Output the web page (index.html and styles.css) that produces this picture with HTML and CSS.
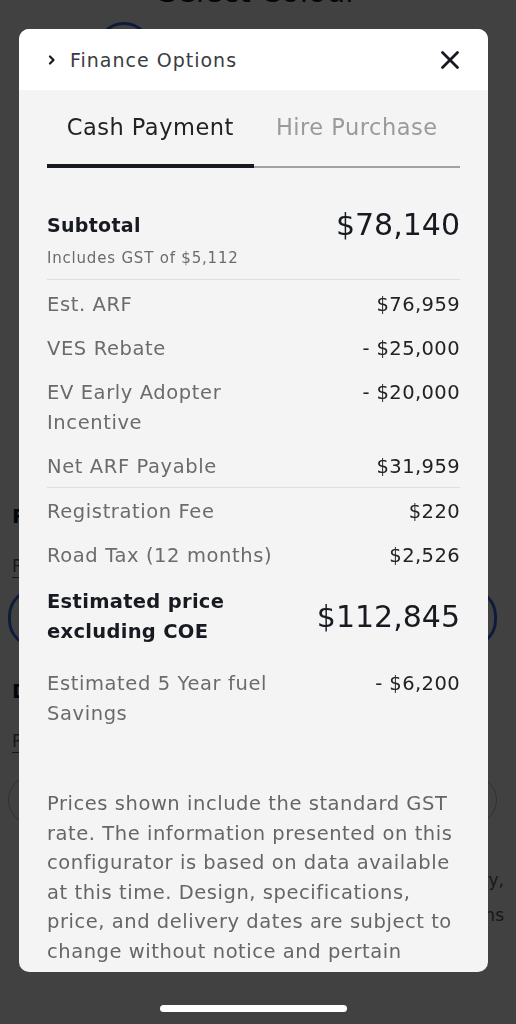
FILE: index.html
```html
<!DOCTYPE html>
<html lang="en">
<head>
  <meta charset="UTF-8" />
  <meta name="viewport" content="width=device-width, initial-scale=1.0" />
  <title>Finance Options</title>
  <link rel="stylesheet" href="styles.css">
</head>
<body>
  <!-- page behind the modal, scrolled a little -->
  <div class="page">
    <h1 class="page-title">Select Colour</h1>
    <div class="swatches">
      <span class="swatch selected"></span>
    </div>

    <div class="section">
      <div class="section-title">Range</div>
      <div class="section-link">Range details</div>
      <div class="pill selected"></div>
    </div>

    <div class="section">
      <div class="section-title">Drive</div>
      <div class="section-link">Rear-Wheel Drive</div>
      <div class="pill"></div>
      <p class="section-note">Figures shown are estimates only and may vary,<br>depending on conditions and options</p>
    </div>
  </div>

  <div class="overlay"></div>

  <div class="modal">
    <div class="modal-head">
      <div class="modal-title">
        <svg class="chev" width="8" height="10" viewBox="0 0 8 10">
          <path d="M2 1.5 L5.5 5 L2 8.5" fill="none" stroke="#171a20" stroke-width="2.2" stroke-linecap="round" stroke-linejoin="round"/>
        </svg>
        <span>Finance Options</span>
      </div>
      <svg class="close" width="20" height="20" viewBox="0 0 20 20">
        <path d="M2.5 2.5 L17.5 17.5 M17.5 2.5 L2.5 17.5" stroke="#171a20" stroke-width="2.8" stroke-linecap="round"/>
      </svg>
    </div>

    <div class="modal-body">
      <div class="tabs">
        <div class="tab active">Cash Payment</div>
        <div class="tab">Hire Purchase</div>
      </div>

      <div class="subtotal">
        <div class="row center">
          <div class="sub-label">Subtotal</div>
          <div class="big-value">$78,140</div>
        </div>
        <div class="gst">Includes GST of $5,112</div>
      </div>

      <div class="group">
        <div class="row"><div class="label">Est. ARF</div><div class="value">$76,959</div></div>
        <div class="row"><div class="label">VES Rebate</div><div class="value">- $25,000</div></div>
        <div class="row"><div class="label">EV Early Adopter Incentive</div><div class="value">- $20,000</div></div>
        <div class="row"><div class="label">Net ARF Payable</div><div class="value">$31,959</div></div>
      </div>

      <div class="group last">
        <div class="row"><div class="label">Registration Fee</div><div class="value">$220</div></div>
        <div class="row"><div class="label">Road Tax (12 months)</div><div class="value">$2,526</div></div>
        <div class="row center total">
          <div class="label strong">Estimated price excluding COE</div>
          <div class="big-value">$112,845</div>
        </div>
        <div class="row savings"><div class="label">Estimated 5 Year fuel Savings</div><div class="value">- $6,200</div></div>
      </div>

      <p class="disclaimer">Prices shown include the standard GST rate. The information presented on this configurator is based on data available at this time. Design, specifications, price, and delivery dates are subject to change without notice and pertain specifically to vehicles sold in Singapore.</p>
    </div>
  </div>

  <div class="home-bar"></div>
</body>
</html>
```

FILE: styles.css
```css
* {
  box-sizing: border-box;
}

html, body {
  margin: 0;
  padding: 0;
  height: 100%;
  width: 100%;
  font-family: 'DejaVu Sans', 'Noto Sans', sans-serif;
  overflow: hidden;
}

body {
  background: #ffffff;
  color: #171a20;
}

/* background page */
.page {
  margin-top: -26px;
  padding: 0 12px;
}

.page-title {
  margin: 0;
  text-align: center;
  font-size: 30px;
  font-weight: 500;
  line-height: 36px;
  color: #171a20;
}

.swatches {
  display: flex;
  gap: 20px;
  padding: 12px 0 0 84px;
}

.swatch {
  width: 56px;
  height: 56px;
  border-radius: 50%;
  background: #fff;
}

.swatch.selected {
  border: 3px solid #3e6ae1;
}

.section {
  padding-top: 425px;
}

.section + .section {
  padding-top: 30px;
}

.section-title {
  font-size: 20px;
  font-weight: 700;
  line-height: 26px;
}

.section-link {
  margin-top: 26px;
  font-size: 17px;
  color: #5c5e62;
  line-height: 22px;
  border-bottom: 1px solid #5c5e62;
  width: max-content;
}

.pill {
  margin: 22px -4px 0 -4px;
  height: 50px;
  width: 489px;
  border-radius: 28px;
  border: 1px solid #bbb;
}

.pill.selected {
  margin-top: 10px;
  height: 60px;
  border: 3px solid #3e6ae1;
}

.section-note {
  margin: 38px 0 0;
  font-size: 17px;
  line-height: 35px;
  color: #5c5e62;
  text-align: right;
}

.overlay {
  position: fixed;
  inset: 0;
  background: rgba(0, 0, 0, 0.745);
}

/* modal */
.modal {
  position: fixed;
  top: 29px;
  left: 19px;
  width: 469px;
  height: 943px;
  border-radius: 10px;
  overflow: hidden;
  display: flex;
  flex-direction: column;
  background: #f4f4f4;
}

.modal-head {
  height: 61px;
  flex: none;
  background: #fff;
  display: flex;
  align-items: center;
  justify-content: space-between;
  padding: 0 28px 0 29px;
}

.modal-title {
  display: flex;
  align-items: center;
  gap: 14px;
  font-size: 19px;
  letter-spacing: 1px;
  color: #393c41;
}

.chev {
  display: block;
}

.close {
  display: block;
}

.modal-body {
  padding: 0 28px;
  overflow: hidden;
}

.tabs {
  display: grid;
  grid-template-columns: 1fr 1fr;
}

.tab {
  text-align: center;
  font-size: 22.5px;
  letter-spacing: 0.5px;
  line-height: 28px;
  padding: 23px 0 24px;
  color: #9a9a9a;
  border-bottom: 2px solid #a2a2a2;
}

.tab.active {
  color: #222;
  padding-bottom: 23px;
  border-bottom: 4px solid #171a20;
}

.subtotal {
  padding: 44px 0 10px;
  border-bottom: 1px solid #dedede;
}

.row {
  display: flex;
  justify-content: space-between;
  align-items: flex-start;
  gap: 20px;
}

.row.center {
  align-items: center;
}

.sub-label {
  font-size: 19px;
  font-weight: 600;
  letter-spacing: 0.3px;
  line-height: 26px;
  color: #171a20;
}

.big-value {
  font-size: 30px;
  line-height: 26px;
  color: #171a20;
}

.gst {
  margin-top: 9px;
  font-size: 15px;
  letter-spacing: 0.8px;
  line-height: 22px;
  color: #6b6b6b;
}

.group {
  display: flex;
  flex-direction: column;
  gap: 14px;
  padding: 10px 0 5px;
  border-bottom: 1px solid #dedede;
}

.group.last {
  border-bottom: none;
  padding-top: 9px;
}

.label {
  max-width: 245px;
  font-size: 19.5px;
  letter-spacing: 0.6px;
  line-height: 30px;
  color: #6b6b6b;
}

.label.strong {
  font-weight: 600;
  letter-spacing: 0.3px;
  color: #171a20;
}

.value {
  font-size: 19.5px;
  letter-spacing: 0.4px;
  line-height: 30px;
  color: #222;
  white-space: nowrap;
}

.total {
  margin-top: 2px;
}

.savings {
  margin-top: 8px;
}

.disclaimer {
  margin: 55px 0 0;
  font-size: 19.5px;
  letter-spacing: 0.55px;
  line-height: 29.6px;
  color: #666;
}

.home-bar {
  position: fixed;
  left: 160px;
  top: 1005px;
  width: 187px;
  height: 7px;
  border-radius: 4px;
  background: #fff;
}
```
